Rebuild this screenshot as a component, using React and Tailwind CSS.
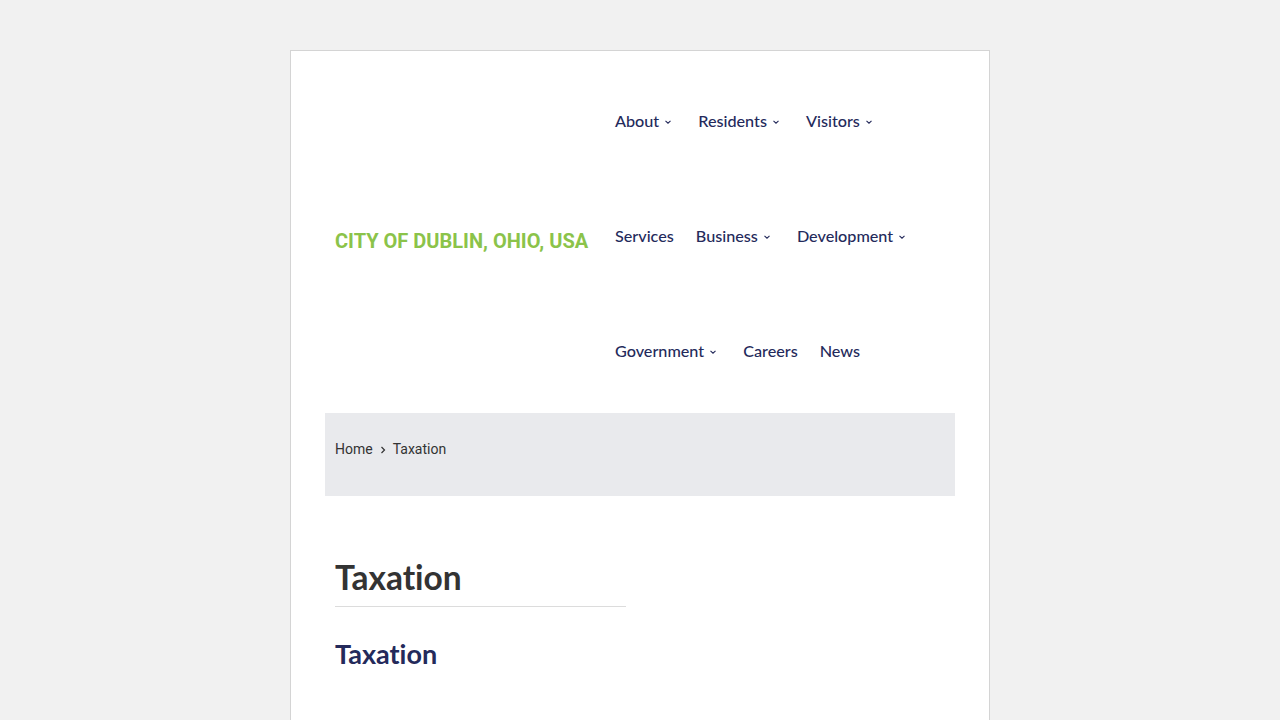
import React from 'react';

const Chevron = () => (
  <svg width="8" height="8" viewBox="0 0 8 8" className="ml-[5px] mr-[4px] mt-[1px]" fill="none" stroke="currentColor" strokeWidth="1.1">
    <path d="M1.5 2.8 L4 5.2 L6.5 2.8" />
  </svg>
);

const NavItem = ({ label, sub }) => (
  <a href="#" className="flex items-center text-[16.2px] font-medium text-[#242a5b]">
    <span>{label}</span>
    {sub && <Chevron />}
  </a>
);

const rows = [
  [{ label: 'About', sub: true }, { label: 'Residents', sub: true }, { label: 'Visitors', sub: true }],
  [{ label: 'Services' }, { label: 'Business', sub: true }, { label: 'Development', sub: true }],
  [{ label: 'Government', sub: true }, { label: 'Careers' }, { label: 'News' }],
];

export default function App() {
  return (
    <div
      className="min-h-screen bg-[#f1f1f1] pt-[50px]"
      style={{ fontFamily: 'Lato, "Open Sans", sans-serif', fontVariantLigatures: 'none' }}
    >
      <div className="mx-auto w-[700px] min-h-[700px] bg-white border border-[#d4d4d4] px-[34px]">
        <header className="flex items-center pt-[13px] pb-[4px]">
          <div className="w-[290px] pl-[10px] pt-[8px]">
            <span className="text-[20px] font-bold text-[#8bc34a] whitespace-nowrap" style={{ fontFamily: 'Roboto, sans-serif' }}>
              CITY OF DUBLIN, OHIO, USA
            </span>
          </div>
          <nav className="flex flex-col">
            {rows.map((row, i) => (
              <div key={i} className="flex items-center h-[115px] gap-[22px]">
                {row.map((item) => (
                  <NavItem key={item.label} {...item} />
                ))}
              </div>
            ))}
          </nav>
        </header>

        <div className="bg-[#e9eaed] h-[83px] px-[10px] pt-[26px]" style={{ fontFamily: 'Roboto, sans-serif' }}>
          <div className="flex items-center text-[14px] text-[#333]">
            <a href="#">Home</a>
            <svg width="8" height="8" viewBox="0 0 8 8" className="mx-[6px]" fill="none" stroke="currentColor" strokeWidth="1.2">
              <path d="M2.5 1 L5.5 4 L2.5 7" />
            </svg>
            <span>Taxation</span>
          </div>
        </div>

        <main className="px-[10px] pt-[61px]">
          <h1 className="text-[33.5px] font-bold text-[#333] leading-[40px] pb-[9px] border-b border-[#dcdcdc] w-[291px]">Taxation</h1>
          <h2 className="mt-[31px] text-[27px] font-bold text-[#242a5b] leading-[32px]">Taxation</h2>
        </main>
      </div>
    </div>
  );
}
